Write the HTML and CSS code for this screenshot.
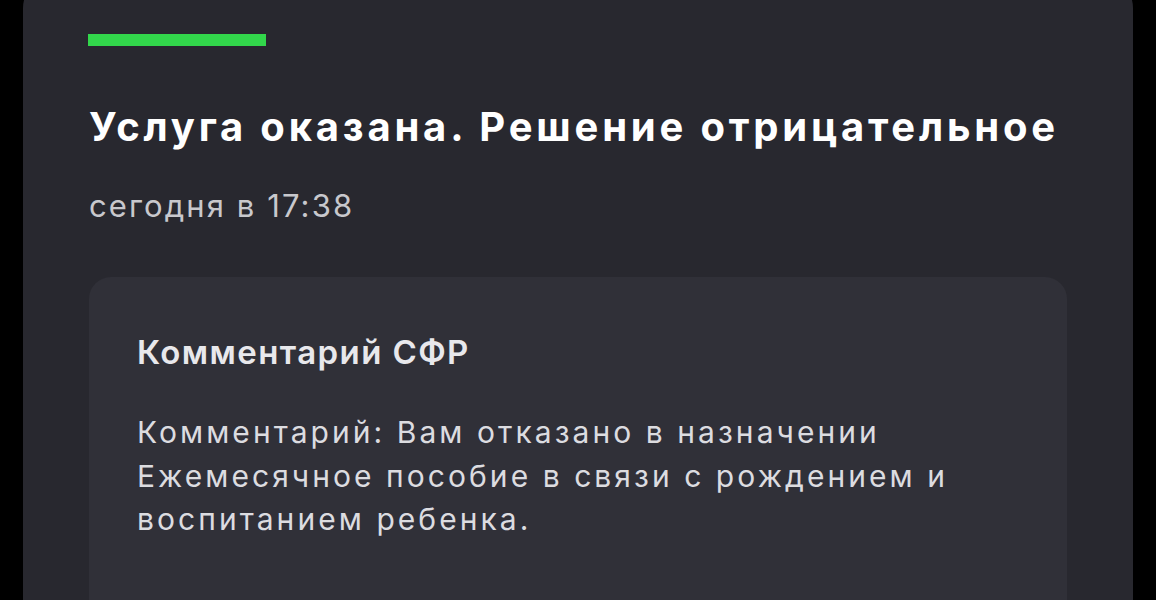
FILE: index.html
```html
<!DOCTYPE html>
<html lang="ru">
<head>
    <meta charset="UTF-8">
    <meta name="viewport" content="width=device-width, initial-scale=1.0">
    <title>Статус заявления</title>
    <link rel="stylesheet" href="styles.css">
</head>
<body>
    <div class="status-card">
        <div class="status-bar"></div>
        <h1 class="status-title">Услуга оказана. Решение отрицательное</h1>
        <div class="status-date">сегодня в 17:38</div>
        <div class="comment">
            <h2 class="comment-title">Комментарий СФР</h2>
            <p class="comment-text">Комментарий: Вам отказано в назначении Ежемесячное пособие в связи с рождением и воспитанием ребенка.</p>
        </div>
    </div>
</body>
</html>
```

FILE: styles.css
```css
body {
    margin: 0;
    background-color: #000;
    font-family: Inter, "Noto Sans", sans-serif;
    color: #fff;
    overflow: hidden;
}
.status-card {
    margin: -24px 23px 0 23px;
    padding: 58px 66px 60px 66px;
    background-color: #28282f;
    border-radius: 32px;
    min-height: 700px;
}
.status-bar {
    width: 178px;
    height: 12px;
    margin-left: -1px;
    background-color: #32d74b;
}
.status-title {
    margin: 56px 0 0 0;
    font-size: 40px;
    font-weight: 700;
    line-height: 50px;
    letter-spacing: 3.8px;
    color: #fff;
}
.status-date {
    margin-top: 34px;
    font-size: 31px;
    line-height: 40px;
    letter-spacing: 2.1px;
    color: #c8c8cd;
}
.comment {
    margin-top: 51px;
    padding: 55px 48px 120px 48px;
    background-color: #303038;
    border-radius: 22px;
}
.comment-title {
    margin: 0;
    font-size: 33px;
    font-weight: 600;
    line-height: 40px;
    letter-spacing: 1.4px;
    color: #e8e8ec;
}
.comment-text {
    margin: 39px 0 0 0;
    font-size: 30px;
    line-height: 43.5px;
    letter-spacing: 3.05px;
    color: #dcdce0;
}
```
